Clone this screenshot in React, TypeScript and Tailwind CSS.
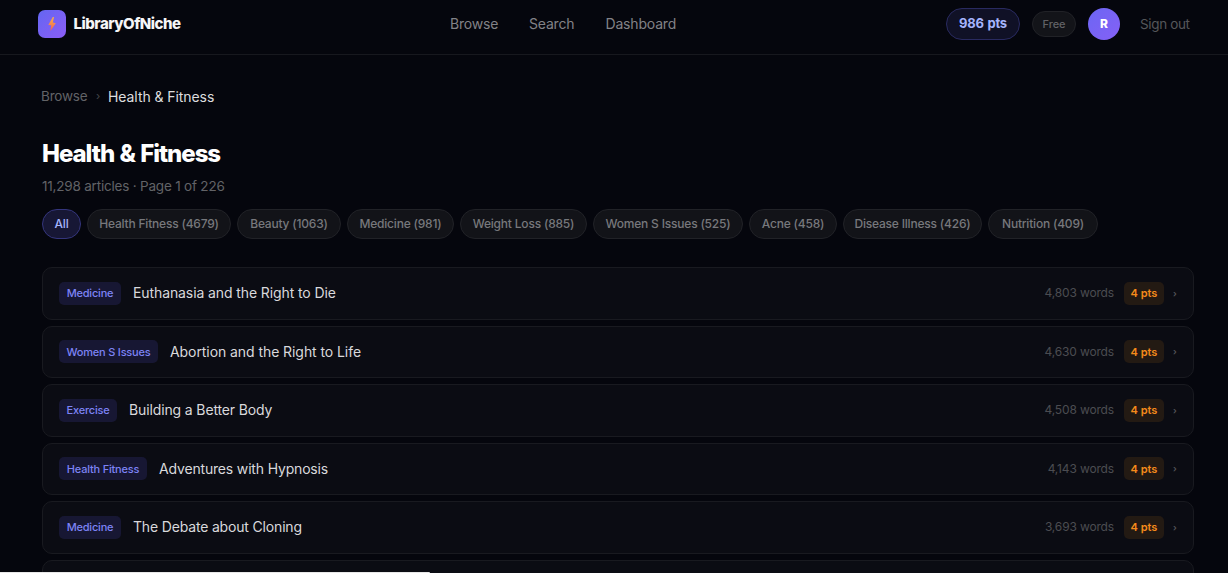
import clsx from "clsx";

type Category = { label: string; className: string };
type Article = { tag: string; tagClass: string; title: string; titleClass: string; words: string };

const categories: Category[] = [
  { label: "All", className: "w-[39px]" },
  { label: "Health Fitness (4679)", className: "w-[144px]" },
  { label: "Beauty (1063)", className: "w-[104px]" },
  { label: "Medicine (981)", className: "w-[107px]" },
  { label: "Weight Loss (885)", className: "w-[127px]" },
  { label: "Women S Issues (525)", className: "w-[150px]" },
  { label: "Acne (458)", className: "w-[88px]" },
  { label: "Disease Illness (426)", className: "w-[139px]" },
  { label: "Nutrition (409)", className: "w-[110px]" },
];

const articles: Article[] = [
  {
    tag: "Medicine",
    tagClass: "w-[62px]",
    title: "Euthanasia and the Right to Die",
    titleClass: "tracking-[-0.1px]",
    words: "4,803",
  },
  {
    tag: "Women S Issues",
    tagClass: "w-[99px]",
    title: "Abortion and the Right to Life",
    titleClass: "tracking-[-0.07px]",
    words: "4,630",
  },
  {
    tag: "Exercise",
    tagClass: "w-[58px]",
    title: "Building a Better Body",
    titleClass: "tracking-[-0.13px]",
    words: "4,508",
  },
  {
    tag: "Health Fitness",
    tagClass: "w-[88px]",
    title: "Adventures with Hypnosis",
    titleClass: "tracking-[-0.17px]",
    words: "4,143",
  },
  {
    tag: "Medicine",
    tagClass: "w-[62px]",
    title: "The Debate about Cloning",
    titleClass: "tracking-[-0.17px]",
    words: "3,693",
  },
];

const rowClass = "flex h-[52.5px] shrink-0 items-center rounded-[10px] border border-[#191a20] bg-[#0b0c13] px-4";

function BoltIcon() {
  return (
    <svg width="10" height="16" viewBox="0 0 10 16">
      <defs>
        <linearGradient id="bolt" x1="0" y1="0" x2="0" y2="1">
          <stop offset="0" stopColor="#f6b04e" />
          <stop offset="1" stopColor="#f5604c" />
        </linearGradient>
      </defs>
      <path d="M5.8 1 1.3 8.9l2.9.4L3.4 15 8.8 7.3 5.9 6.6 7 1Z" fill="url(#bolt)" />
    </svg>
  );
}

function Header() {
  return (
    <header className="grid h-[55px] grid-cols-[412px_1fr_auto] items-center border-b border-[#17181e] pr-[38px] pb-1.5 pl-[38px]">
      <a className="flex items-center gap-[7.5px]">
        <span className="flex size-7 items-center justify-center rounded-[7px] bg-linear-to-br from-[#6366f1] to-[#8b5cf6]">
          <BoltIcon />
        </span>
        <span className="text-[15px] font-extrabold tracking-[-0.48px] text-[#f5f5f7]">LibraryOfNiche</span>
      </a>
      <nav className="flex items-center text-sm tracking-[-0.18px] text-[#828287]">
        <a className="w-[79px]">Browse</a>
        <a className="w-[76.5px]">Search</a>
        <a>Dashboard</a>
      </nav>
      <div className="flex items-center gap-3">
        <span className="flex h-8 w-[74px] items-center justify-center rounded-full border border-[#292a60] bg-[#101126] text-[13px] font-bold tracking-[-0.25px] text-[#a5b4fc] [word-spacing:1px]">
          986 pts
        </span>
        <span className="flex h-[26px] w-11 items-center justify-center rounded-full border border-[#212227] bg-[#131419] text-[11px] font-medium tracking-[-0.1px] text-[#626266]">
          Free
        </span>
        <span className="flex size-8 items-center justify-center rounded-full bg-linear-to-br from-[#6b66f3] to-[#8560f6] text-xs font-extrabold text-white">
          R
        </span>
        <a className="w-[58px] pl-2 text-[13.5px] tracking-[-0.35px] whitespace-nowrap text-[#55565a]">Sign out</a>
      </div>
    </header>
  );
}

function ArticleRow({ article }: { article: Article }) {
  return (
    <a className={rowClass}>
      <span
        className={clsx(
          "mr-3 flex h-[23px] shrink-0 items-center justify-center rounded-[5px] bg-[#171733] text-[11px] font-medium tracking-[-0.2px] whitespace-nowrap text-[#7d83f5]",
          article.tagClass
        )}
      >
        {article.tag}
      </span>
      <span className={clsx("flex-1 text-sm whitespace-nowrap text-[#d9d9dc]", article.titleClass)}>{article.title}</span>
      <span className="mr-2.5 text-xs tracking-[-0.15px] text-[#4b4c51]">{article.words} words</span>
      <span className="mr-[9px] flex h-[23px] w-10 items-center justify-center rounded-[5px] bg-[#231a13] text-[11px] font-semibold text-[#f58b1b]">
        4 pts
      </span>
      <span className="w-1 text-[9px] font-semibold text-[#55565a]">›</span>
    </a>
  );
}

export default function App() {
  return (
    <div className="relative h-[573px] overflow-hidden bg-[#05060d] font-['Inter',sans-serif]">
      <Header />
      <main className="ml-[42px] flex w-[1152px] flex-col">
        <div className="mt-8 flex h-5 items-center text-sm">
          <a className="-ml-px w-[55px] text-[13.5px] tracking-[-0.2px] text-[#626367]">Browse</a>
          <span className="w-3 text-[11px] text-[#46474b]">›</span>
          <span className="tracking-[-0.07px] text-[#dddddf]">Health &amp; Fitness</span>
        </div>
        <h1 className="mt-8 h-[30px] text-2xl leading-[30px] font-extrabold tracking-[-1.05px] text-white [word-spacing:1.2px]">
          Health &amp; Fitness
        </h1>
        <p className="mt-[7px] h-5 text-[13.5px] leading-5 tracking-[-0.2px] text-[#626367]">
          11,298 articles · Page 1 of 226
        </p>
        <div className="mt-[13px] flex gap-1.5">
          {categories.map((category, i) => (
            <button
              key={category.label}
              className={clsx(
                "flex h-[30px] shrink-0 items-center justify-center rounded-full border text-xs font-medium tracking-[-0.2px] whitespace-nowrap",
                i === 0 ? "border-[#34357c] bg-[#171735] text-[#a5b4fc]" : "border-[#212227] bg-[#121318] text-[#77787c]",
                category.className
              )}
            >
              {category.label}
            </button>
          ))}
        </div>
        <div className="mt-7 flex flex-col gap-1.5">
          {articles.map((article) => (
            <ArticleRow key={article.title} article={article} />
          ))}
          <div className={rowClass} />
        </div>
      </main>
      <div className="absolute bottom-0 left-0 h-px w-[430px] rounded-tr-sm bg-[#e8e8e8]" />
    </div>
  );
}
